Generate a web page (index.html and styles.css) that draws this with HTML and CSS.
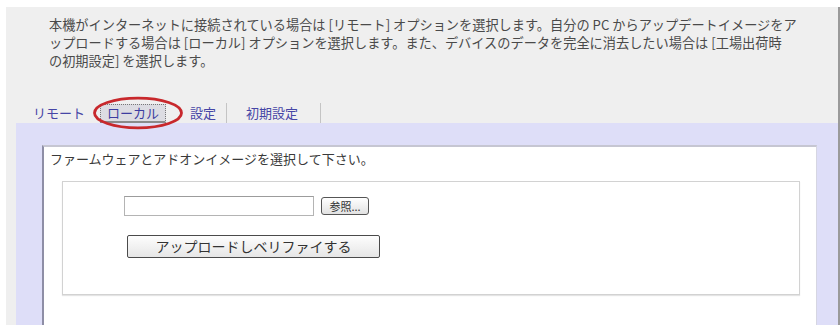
FILE: index.html
```html
<!DOCTYPE html>
<html lang="ja">

<head>
    <meta charset="UTF-8">
    <meta name="viewport" content="width=device-width, initial-scale=1.0">
    <title>ファームウェア更新</title>
    <link rel="stylesheet" href="styles.css">
</head>

<body>
    <div class="page">
        <p class="intro">
            本機がインターネットに接続されている場合は [リモート] オプションを選択します。自分の PC からアップデートイメージをア<br>
            ップロードする場合は [ローカル] オプションを選択します。また、デバイスのデータを完全に消去したい場合は [工場出荷時<br>
            の初期設定] を選択します。
        </p>
        <div class="tabs">
            <a href="javascript:;" class="tab tab-remote">リモート</a>
            <a href="javascript:;" class="tab tab-local">
                <span class="focus">ローカル</span>
                <svg class="mark" width="92" height="34" viewBox="0 0 92 34">
                    <ellipse cx="46" cy="17" rx="43.5" ry="14.8" fill="none" stroke="#c8282c" stroke-width="2.8"/>
                </svg>
            </a>
            <a href="javascript:;" class="tab tab-setting">設定</a>
            <a href="javascript:;" class="tab tab-reset">初期設定</a>
        </div>
        <div class="panel">
            <div class="sheet">
                <p class="hint">ファームウェアとアドオンイメージを選択して下さい。</p>
                <div class="upload">
                    <div class="filerow">
                        <input type="text" class="file">
                        <button class="browse">参照...</button>
                    </div>
                    <button class="send">アップロードしベリファイする</button>
                </div>
            </div>
        </div>
    </div>
</body>

</html>
```

FILE: styles.css
```css
* {
    padding: 0;
    margin: 0;
}

body {
    background: #fff;
    font-family: "Noto Sans CJK JP", "Liberation Sans", sans-serif;
    color: #444;
}

.page {
    margin: 7px 0 0 6px;
    height: 318px;
    background: #efefef;
    border-right: 2px solid #9a9a9a;
    display: flex;
    flex-direction: column;
}

.intro {
    padding: 9px 10px 0 43px;
    font-size: 13.2px;
    line-height: 18px;
    color: #4a4a4a;
    white-space: nowrap;
}

.tabs {
    display: flex;
    align-items: center;
    height: 20px;
    margin-top: 33px;
    padding-left: 27px;
    font-size: 13px;
}

.tab {
    color: #4646a6;
    text-decoration: none;
    line-height: 20px;
}

.tab-remote {
    margin-right: 15px;
}

.tab-local {
    position: relative;
    margin-right: 24px;
}

.focus {
    display: block;
    padding: 0 6px;
    line-height: 16px;
    border: 1px dotted #777;
    border-bottom: 2px solid #8a8a8a;
    background: #dcdce2;
    color: #3c3ca0;
}

.mark {
    position: absolute;
    left: -8px;
    top: -8px;
}

.tab-setting {
    padding-right: 10px;
    border-right: 1px solid #c4c4c4;
}

.tab-reset {
    margin-left: 19px;
    padding-right: 22px;
    border-right: 1px solid #c4c4c4;
}

.panel {
    flex: 1;
    margin-left: 10px;
    padding: 22px 21px 0 26px;
    background: #dedef8;
    display: flex;
}

.sheet {
    flex: 1;
    background: #fff;
    border-top: 2px solid #c6c6d2;
    border-left: 2px solid #8e8ea6;
    border-right: 1px solid #d6d6e2;
    padding: 3px 16px 0 6px;
}

.hint {
    font-size: 13px;
    line-height: 18px;
    color: #3a3a3a;
}

.upload {
    margin: 13px 0 0 12px;
    height: 114px;
    border: 1px solid #d2d2d2;
    box-shadow: 0 1px 1px #e4e4e4;
    padding: 14px 0 0 61px;
    box-sizing: border-box;
}

.filerow {
    display: flex;
    align-items: center;
}

.file {
    width: 190px;
    height: 20px;
    box-sizing: border-box;
    border: 1px solid #b4b4b4;
    border-top-color: #9c9c9c;
    background: #fff;
}

.browse {
    margin-left: 7px;
    width: 48px;
    height: 18px;
    font-family: inherit;
    font-size: 11px;
    line-height: 14px;
    color: #333;
    border: 1px solid #555;
    border-radius: 3px;
    background: linear-gradient(#fff, #e2e2e2);
}

.send {
    display: block;
    margin: 19px 0 0 3px;
    width: 253px;
    height: 23px;
    font-family: inherit;
    font-size: 14px;
    line-height: 19px;
    color: #333;
    border: 1px solid #4a4a4a;
    border-radius: 2px;
    background: linear-gradient(#fdfdfd, #e6e6e6);
}
```
